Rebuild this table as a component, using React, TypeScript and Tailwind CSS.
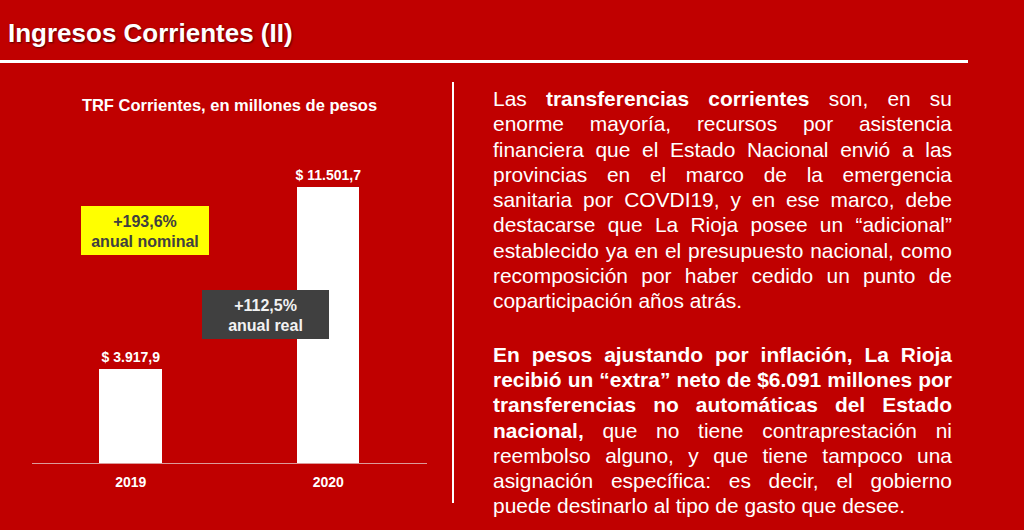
import React from "react";

export default function App() {
  return (
    <div className="w-[1024px] h-[530px] overflow-hidden bg-[#c00000] text-white font-['Liberation_Sans',Arial,sans-serif]">
      <div className="pl-[8px] pt-[18px]">
        <h1 className="text-[26px] leading-[30px] font-bold [text-shadow:1px_1px_2px_rgba(0,0,0,0.55)]">
          Ingresos Corrientes (II)
        </h1>
      </div>
      <div className="mt-[12px] h-[3px] w-[968px] bg-white" />
      <div className="flex">
        <div className="w-[452px] shrink-0 pt-[32px]">
          <div className="ml-[32px] w-[395px]">
            <div className="h-[20px] text-center text-[16.5px] leading-[20px] font-bold">
              TRF Corrientes, en millones de pesos
            </div>
            <div className="relative flex h-[349px] items-end border-b border-[#dc9a9a]">
              <div className="flex flex-1 flex-col items-center">
                <div className="mb-[4px] text-[14px] leading-[16px] font-bold">$ 3.917,9</div>
                <div className="h-[94px] w-[63px] bg-white" />
              </div>
              <div className="flex flex-1 flex-col items-center">
                <div className="mb-[4px] text-[14px] leading-[16px] font-bold">$ 11.501,7</div>
                <div className="h-[276px] w-[62px] bg-white" />
              </div>
              <div className="absolute left-[49px] top-[91px] h-[49px] w-[128px] bg-[#ffff00] pt-[6px] text-center text-[16px] leading-[19.5px] font-bold text-[#404040]">
                <div>+193,6%</div>
                <div>anual nominal</div>
              </div>
              <div className="absolute left-[170px] top-[175px] h-[49px] w-[127px] bg-[#404040] pt-[6px] text-center text-[16px] leading-[19.5px] font-bold text-[#f2f2f2]">
                <div>+112,5%</div>
                <div>anual real</div>
              </div>
            </div>
            <div className="mt-[10px] flex text-[14px] leading-[16px] font-bold">
              <div className="flex-1 text-center">2019</div>
              <div className="flex-1 text-center">2020</div>
            </div>
          </div>
        </div>
        <div className="mt-[19px] h-[421px] w-[2px] shrink-0 bg-white" />
        <div className="ml-[39px] mt-[23px] w-[459px] text-justify text-[20.94px] leading-[25.3px]">
          <p>
            Las <b>transferencias corrientes</b> son, en su enorme mayoría, recursos por asistencia
            financiera que el Estado Nacional envió a las provincias en el marco de la emergencia
            sanitaria por COVDI19, y en ese marco, debe destacarse que La Rioja posee un
            “adicional” establecido ya en el presupuesto nacional, como recomposición por haber
            cedido un punto de coparticipación años atrás.
          </p>
          <p className="mt-[28px]">
            <b>
              En pesos ajustando por inflación, La Rioja recibió un “extra” neto de $6.091 millones
              por transferencias no automáticas del Estado nacional,
            </b>{" "}
            que no tiene contraprestación ni reembolso alguno, y que tiene tampoco una asignación
            específica: es decir, el gobierno puede destinarlo al tipo de gasto que desee.
          </p>
        </div>
      </div>
    </div>
  );
}
